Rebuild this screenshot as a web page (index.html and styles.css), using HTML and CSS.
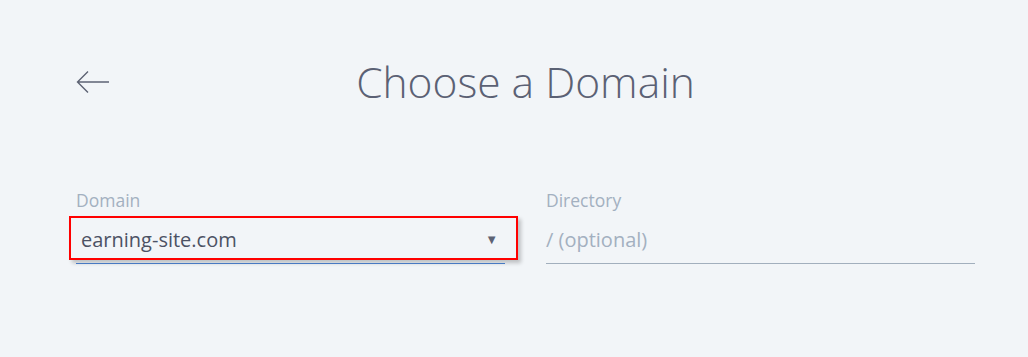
FILE: index.html
```html
<!DOCTYPE html>
<html lang="en">
<head>
<meta charset="utf-8">
<title>Choose a Domain</title>
<link rel="stylesheet" href="styles.css">
</head>
<body>
<div class="page">
  <header class="header">
    <button class="back" aria-label="Back">
      <svg width="34" height="24" viewBox="0 0 34 24"><path d="M33 12H1.5M12 1.5L1.5 12L12 22.5" fill="none" stroke="#5d6374" stroke-width="1.4"/></svg>
    </button>
    <h1 class="title">Choose a Domain</h1>
  </header>
  <form class="fields">
    <div class="field">
      <label class="label">Domain</label>
      <div class="select">
        <span class="value">earning-site.com</span>
        <span class="caret">&#9660;</span>
        <span class="highlight"></span>
      </div>
    </div>
    <div class="field">
      <label class="label">Directory</label>
      <div class="input">
        <span class="placeholder">/ (optional)</span>
      </div>
    </div>
  </form>
</div>
</body>
</html>
```
FILE: styles.css
```css
html, body {
  margin: 0;
  padding: 0;
  background: #f2f5f8;
}
body {
  font-family: "Open Sans", "Liberation Sans", sans-serif;
  width: 1028px;
  height: 357px;
  overflow: hidden;
}
.page {
  padding: 52px 53px 0 76px;
}
.header {
  position: relative;
  display: flex;
  justify-content: center;
  align-items: center;
  height: 60px;
}
.back {
  position: absolute;
  left: 0;
  top: 18px;
  border: 0;
  background: none;
  padding: 0;
  width: 34px;
  height: 24px;
}
.back svg { display: block; }
.title {
  margin: 0;
  font-weight: 300;
  font-size: 42.5px;
  line-height: 60px;
  color: #5b6174;
  letter-spacing: 0;
}
.fields {
  display: grid;
  grid-template-columns: 429px 429px;
  column-gap: 41px;
  margin-top: 77px;
}
.field {
  display: flex;
  flex-direction: column;
}
.label {
  font-size: 17.5px;
  line-height: 22px;
  color: #a3b0c0;
}
.select, .input {
  position: relative;
  display: flex;
  align-items: center;
  height: 48px;
  margin-top: 4px;
}
.select {
  border-bottom: 1px solid #4f86d6;
  padding: 0 7px 0 5px;
}
.input {
  border-bottom: 1px solid #a2afbd;
}
.value {
  flex: 1;
  font-size: 20px;
  color: #4c5264;
}
.caret {
  font-size: 13px;
  color: #5d6374;
}
.placeholder {
  font-size: 20px;
  color: #a3b0c0;
}
.highlight {
  position: absolute;
  left: -7px;
  right: -13px;
  top: 1px;
  bottom: 3px;
  border: 2px solid #ff0000;
  box-shadow: 3px 3px 4px rgba(0,0,0,0.22);
  pointer-events: none;
}
```
